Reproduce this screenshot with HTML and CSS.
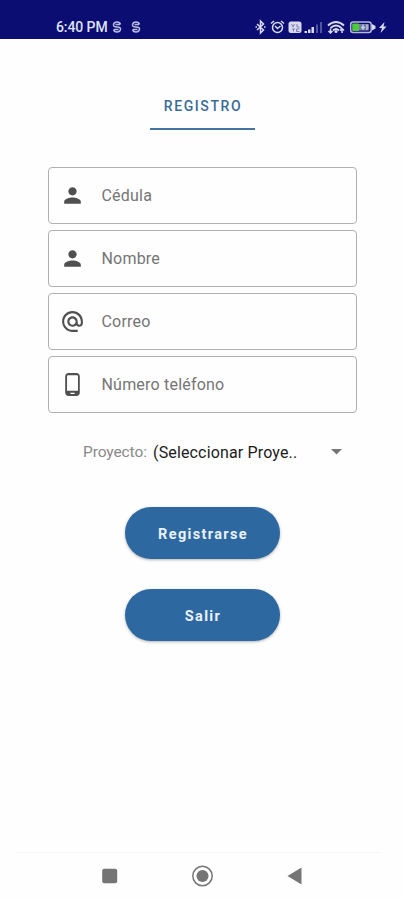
FILE: index.html
```
<!DOCTYPE html>
<html lang="es">

<head>
    <meta charset="UTF-8">
    <meta name="viewport" content="width=device-width, initial-scale=1.0">
    <title>Registro</title>
    <link rel="stylesheet" href="styles.css">
</head>

<body>
    <div class="layout">
        <header class="status">
            <div class="status-left">
                <span class="time">6:40 PM</span>
                <svg class="app" width="10" height="12" viewBox="0 0 10 12"><path d="M8.500 3.500Q8 1 5 1T1.500 3.500 5 6t3.500 2.500T5 11 1.500 8.500M3.500 3.500H8M2 8.500h4.500"/></svg>
                <svg class="app" width="10" height="12" viewBox="0 0 10 12"><path d="M8.500 3.500Q8 1 5 1T1.500 3.500 5 6t3.500 2.500T5 11 1.500 8.500M3.500 3.500H8M2 8.500h4.500"/></svg>
            </div>
            <svg class="status-icons" width="134" height="18" viewBox="0 0 134 18">
                <!-- bluetooth -->
                <path class="line" d="M2 6l6.500 6L5.500 15V3l3 3L2 12"/>
                <path class="line" d="M.5 9h1.500M9 9h1.500"/>
                <!-- alarma -->
                <circle class="line" cx="22.500" cy="9.500" r="5"/>
                <path class="line" d="M16 5.500l3-2.500M29 5.500l-3-2.500M20 8l2.500 2.500L25.500 8"/>
                <!-- volte -->
                <rect class="fill" x="33.500" y="3.500" width="13" height="11.500" rx="2.500"/>
                <path class="dark" d="M36.500 6l1.500 3 1.500-3M42 6v3h2.500M37 11h3M38.500 11v2.500M44.500 11h-3v2.500h3"/>
                <!-- señal -->
                <path class="fill" d="M49.500 13h2.500v2h-2.500zM53 11.500h2.500V15H53zM56.500 9H59v6h-2.500z"/>
                <path class="fill dim" d="M61 6.500h2V15h-2zM65 4h2v11h-2z"/>
                <!-- wifi -->
                <path class="line wide" d="M73 7.500q8-7 16 0M75.500 10q5.500-5 11 0M78 12.500q3-3 6 0"/>
                <circle class="fill" cx="81" cy="13.500" r="1.500"/>
                <path class="line" d="M75.500 10.500V15M73.500 13l2 2 2-2M87 15v-4.500M85 12.500l2-2 2 2"/>
                <!-- bateria -->
                <rect class="line grey-line" x="95.700" y="4" width="20.500" height="10.500" rx="2.500"/>
                <rect class="fill grey" x="98" y="6" width="16" height="6.500" rx="1"/>
                <rect class="green" x="97.200" y="5.500" width="7" height="7.500" rx="1"/>
                <path class="bright" d="M108 6.500v5.500M106 9.500h4M112 6.500v5.500"/>
                <path class="fill" d="M117 6l3.500 2v2.500l-3.500 2z"/>
                <path class="fill" d="M129.500 4l-5.500 6h3l-1.500 5 6-6.500h-3z"/>
            </svg>
        </header>

        <main class="content">
            <div class="tab">REGISTRO</div>

            <div class="fields">
                <div class="field">
                    <svg width="25" height="25" viewBox="0 0 24 24"><path d="M12 12c2.210 0 4-1.790 4-4s-1.790-4-4-4-4 1.790-4 4 1.790 4 4 4zm0 2c-2.670 0-8 1.340-8 4v2h16v-2c0-2.660-5.330-4-8-4z"/></svg>
                    <span>Cédula</span>
                </div>
                <div class="field">
                    <svg width="25" height="25" viewBox="0 0 24 24"><path d="M12 12c2.210 0 4-1.790 4-4s-1.790-4-4-4-4 1.790-4 4 1.790 4 4 4zm0 2c-2.670 0-8 1.340-8 4v2h16v-2c0-2.660-5.330-4-8-4z"/></svg>
                    <span>Nombre</span>
                </div>
                <div class="field">
                    <svg width="25" height="25" viewBox="0 0 24 24"><path d="M12 2C6.480 2 2 6.480 2 12s4.480 10 10 10h5v-2h-5c-4.340 0-8-3.660-8-8s3.660-8 8-8 8 3.660 8 8v1.430c0 .79-.71 1.570-1.500 1.570s-1.500-.78-1.500-1.570V12c0-2.760-2.240-5-5-5s-5 2.240-5 5 2.240 5 5 5c1.380 0 2.640-.56 3.540-1.470.65.890 1.770 1.470 2.960 1.470 1.970 0 3.500-1.600 3.500-3.570V12c0-5.520-4.480-10-10-10zm0 13c-1.660 0-3-1.340-3-3s1.340-3 3-3 3 1.340 3 3-1.340 3-3 3z"/></svg>
                    <span>Correo</span>
                </div>
                <div class="field">
                    <svg width="25" height="25" viewBox="0 0 24 24"><path d="M16 1H8C6.340 1 5 2.340 5 4v16c0 1.660 1.340 3 3 3h8c1.660 0 3-1.340 3-3V4c0-1.660-1.340-3-3-3zm-2 20h-4v-1h4v1zm3.250-3H6.750V4q0-1 1-1h8.500q1 0 1 1v14z"/></svg>
                    <span>Número teléfono</span>
                </div>
            </div>

            <div class="project">
                <span class="label">Proyecto:</span>
                <span class="value">(Seleccionar Proye..</span>
                <svg class="arrow" width="11" height="6" viewBox="0 0 11 6"><path d="M0 0h11L5.500 5.500z"/></svg>
            </div>

            <button class="btn">Registrarse</button>
            <button class="btn">Salir</button>
        </main>

        <footer class="nav">
            <svg width="22" height="22" viewBox="0 0 22 22"><rect x="3.200" y="3.700" width="15" height="14.500" rx="2"/></svg>
            <svg width="22" height="22" viewBox="0 0 22 22"><circle class="ring" cx="10.500" cy="11" r="9.700"/><circle cx="10.500" cy="11" r="6"/></svg>
            <svg width="22" height="22" viewBox="0 0 22 22"><path d="M3.500 11L17.500 2.500v17z"/></svg>
        </footer>
    </div>
</body>

</html>
```
FILE: styles.css
```
body {
    margin: 0;
    background-color: #fefefe;
    font-family: Roboto, "Liberation Sans", sans-serif;
}
.layout {
    display: flex;
    flex-direction: column;
    width: 404px;
    height: 900px;
    overflow: hidden;
}

/* barra de estado */
.status {
    box-sizing: border-box;
    height: 39px;
    padding: 15px 15px 0 56px;
    display: flex;
    justify-content: space-between;
    background-color: #0c0d73;
    color: #dfe2f5;
}
.status-left {
    display: flex;
    height: 24px;
    align-items: center;
}
.time {
    width: 56px;
    font-size: 14px;
    font-weight: 500;
    letter-spacing: -0.1px;
    white-space: nowrap;
}
.app {
    margin-right: 9px;
    fill: none;
    stroke: #b9bce0;
    stroke-width: 1.4;
}
.status-icons {
    margin-top: 3px;
}
.line {
    fill: none;
    stroke: #d8daf0;
    stroke-width: 1.5;
}
.wide {
    stroke-width: 1.8;
}
.grey-line {
    stroke: #b4b8d8;
}
.fill {
    fill: #d8daf0;
}
.dim {
    opacity: 0.35;
}
.grey {
    fill: #7279a8;
}
.green {
    fill: #4fc83c;
}
.dark {
    fill: none;
    stroke: #7a7cb4;
    stroke-width: 1;
}
.bright {
    fill: none;
    stroke: #c9cde4;
    stroke-width: 1.3;
}

/* contenido */
.content {
    flex: 1;
    display: flex;
    flex-direction: column;
    align-items: center;
}
.tab {
    box-sizing: border-box;
    width: 105px;
    height: 47px;
    margin: 44px 0 37px;
    border-bottom: 2px solid #41749f;
    color: #3a6b98;
    font-size: 14px;
    font-weight: 500;
    line-height: 47px;
    letter-spacing: 1.6px;
    text-align: center;
    text-indent: 2px;
}
.fields {
    display: flex;
    flex-direction: column;
    gap: 6px;
    width: 309px;
    margin-left: 1px;
}
.field {
    box-sizing: border-box;
    display: flex;
    align-items: center;
    height: 57px;
    padding-left: 11px;
    border: 1px solid #b0b0b0;
    border-radius: 4px;
    color: #757575;
    font-size: 16px;
    letter-spacing: 0.2px;
}
.field svg {
    margin-right: 16.500px;
    fill: #505050;
}
.project {
    display: flex;
    align-items: center;
    width: 259px;
    height: 20px;
    margin: 29px 0 45px 21px;
    font-size: 16px;
    white-space: nowrap;
}
.label {
    width: 70px;
    color: #8a8a8a;
    font-size: 15.500px;
    letter-spacing: -0.1px;
}
.value {
    color: #1c1c1c;
    letter-spacing: 0.15px;
}
.arrow {
    margin-left: auto;
    fill: #757575;
}
.btn {
    width: 155px;
    height: 52px;
    margin: 0 0 30px 1px;
    padding: 2px 0 0 1px;
    border: 0;
    border-radius: 26px;
    background-color: #2d68a1;
    box-shadow: 0 1px 3px rgba(0, 0, 0, 0.3);
    color: #eaf2f9;
    font-family: inherit;
    font-size: 14.500px;
    font-weight: 700;
    letter-spacing: 1.35px;
}

/* botones de navegacion */
.nav {
    box-sizing: border-box;
    height: 48px;
    margin: 0 24px 0 16px;
    padding: 12px 74px 0 83px;
    display: flex;
    justify-content: space-between;
    border-top: 1px solid #f5f5f5;
    fill: #757575;
}
.ring {
    fill: none;
    stroke: #757575;
    stroke-width: 1.5;
}
```
